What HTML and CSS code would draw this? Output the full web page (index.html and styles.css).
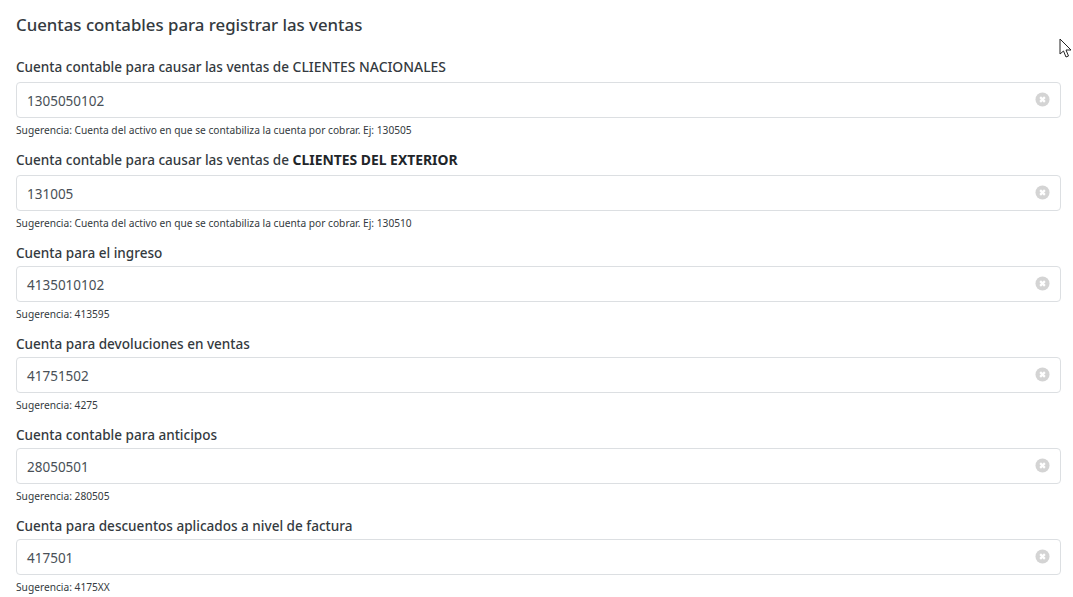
FILE: index.html
```html
<!DOCTYPE html>
<html lang="es">
<head>
    <meta charset="UTF-8">
    <title>Cuentas contables</title>
    <link rel="stylesheet" href="styles.css">
</head>
<body>
<div class="container">
    <svg class="cursor" width="14" height="20" viewBox="0 0 14 20">
        <path d="M1 1 L1 16 L4.5 13 L7 19 L9.5 18 L7 12 L12 12 Z" fill="#fff" stroke="#222" stroke-width="1"/>
    </svg>
    <h1 class="title">Cuentas contables para registrar las ventas</h1>

    <div class="field field-first">
        <label class="field-label">Cuenta contable para causar las ventas de <span class="caps">CLIENTES NACIONALES</span></label>
        <div class="input-box">
            <span class="input-value">1305050102</span>
            <svg class="clear-icon" viewBox="0 0 16 16"><circle cx="8" cy="8" r="7.5"/><path d="M5.5 5.5 L10.5 10.5 M10.5 5.5 L5.5 10.5"/></svg>
        </div>
        <small class="hint">Sugerencia: Cuenta del activo en que se contabiliza la cuenta por cobrar. Ej: 130505</small>
    </div>

    <div class="field">
        <label class="field-label">Cuenta contable para causar las ventas de <b>CLIENTES DEL EXTERIOR</b></label>
        <div class="input-box">
            <span class="input-value">131005</span>
            <svg class="clear-icon" viewBox="0 0 16 16"><circle cx="8" cy="8" r="7.5"/><path d="M5.5 5.5 L10.5 10.5 M10.5 5.5 L5.5 10.5"/></svg>
        </div>
        <small class="hint">Sugerencia: Cuenta del activo en que se contabiliza la cuenta por cobrar. Ej: 130510</small>
    </div>

    <div class="field field-short">
        <label class="field-label">Cuenta para el ingreso</label>
        <div class="input-box">
            <span class="input-value">4135010102</span>
            <svg class="clear-icon" viewBox="0 0 16 16"><circle cx="8" cy="8" r="7.5"/><path d="M5.5 5.5 L10.5 10.5 M10.5 5.5 L5.5 10.5"/></svg>
        </div>
        <small class="hint">Sugerencia: 413595</small>
    </div>

    <div class="field field-short">
        <label class="field-label">Cuenta para devoluciones en ventas</label>
        <div class="input-box">
            <span class="input-value">41751502</span>
            <svg class="clear-icon" viewBox="0 0 16 16"><circle cx="8" cy="8" r="7.5"/><path d="M5.5 5.5 L10.5 10.5 M10.5 5.5 L5.5 10.5"/></svg>
        </div>
        <small class="hint">Sugerencia: 4275</small>
    </div>

    <div class="field field-short">
        <label class="field-label">Cuenta contable para anticipos</label>
        <div class="input-box">
            <span class="input-value">28050501</span>
            <svg class="clear-icon" viewBox="0 0 16 16"><circle cx="8" cy="8" r="7.5"/><path d="M5.5 5.5 L10.5 10.5 M10.5 5.5 L5.5 10.5"/></svg>
        </div>
        <small class="hint">Sugerencia: 280505</small>
    </div>

    <div class="field field-short">
        <label class="field-label">Cuenta para descuentos aplicados a nivel de factura</label>
        <div class="input-box">
            <span class="input-value">417501</span>
            <svg class="clear-icon" viewBox="0 0 16 16"><circle cx="8" cy="8" r="7.5"/><path d="M5.5 5.5 L10.5 10.5 M10.5 5.5 L5.5 10.5"/></svg>
        </div>
        <small class="hint">Sugerencia: 4175XX</small>
    </div>
</div>
</body>
</html>
```
FILE: styles.css
```css
html, body {
    margin: 0;
    padding: 0;
    background: #fff;
    overflow: hidden;
}

body {
    font-family: "Noto Sans", "Open Sans", sans-serif;
    color: #343a40;
}

.container {
    padding: 13px 12px 0 16px;
    height: 584px;
}

.cursor {
    position: absolute;
    left: 1059px;
    top: 38px;
}

.title {
    margin: 0 0 21px;
    font-size: 16.8px;
    line-height: 24px;
    font-weight: 500;
}

.field {
    margin-top: 12px;
    height: 79px;
}

.field-first {
    margin-top: 0;
    height: 81px;
}

.field-label {
    display: block;
    height: 24px;
    font-size: 13.55px;
    line-height: 18px;
    font-weight: 550;
}

.field-short .field-label {
    height: 22px;
    padding-top: 2px;
}

.field-label .caps {
    font-size: 13.9px;
}

.field-label b {
    font-weight: 700;
    font-size: 13.9px;
    color: #212529;
}

.input-box {
    display: flex;
    align-items: center;
    justify-content: space-between;
    box-sizing: border-box;
    height: 36px;
    padding: 0 10px;
    border: 1px solid #dcdfe2;
    border-radius: 4px;
}

.input-value {
    padding-top: 2px;
    font-size: 13.5px;
    color: #495057;
}

.clear-icon {
    width: 15px;
    height: 15px;
    margin-bottom: 2px;
}

.clear-icon circle {
    fill: #d4d4d4;
}

.clear-icon path {
    stroke: #fff;
    stroke-width: 2.4;
}

.hint {
    display: block;
    margin-top: 4px;
    font-size: 10.2px;
    line-height: 16px;
    color: #343a40;
}
```
